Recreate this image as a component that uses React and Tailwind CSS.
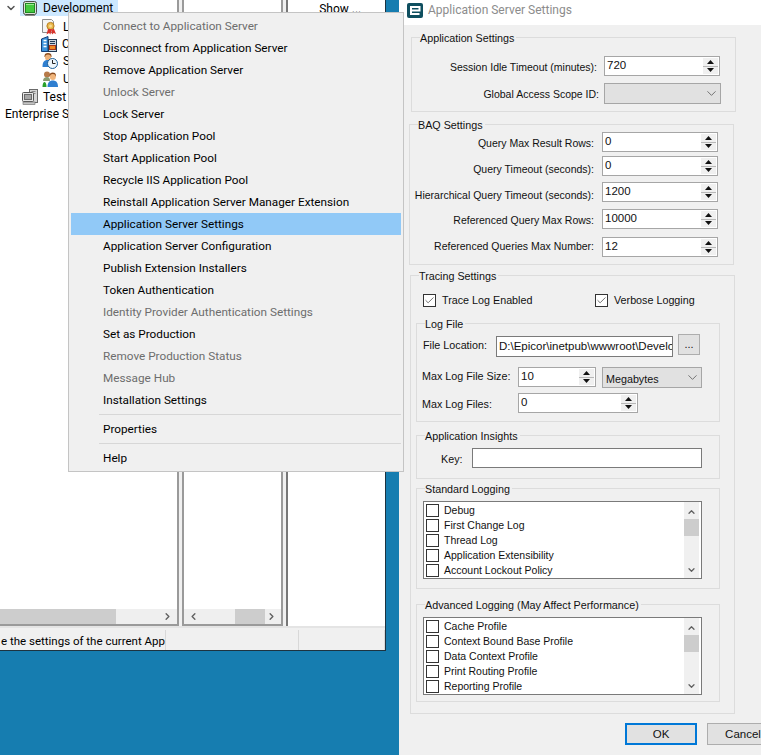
import { ChevronDown, ChevronLeft, ChevronRight, ChevronUp, Check } from "lucide-react";

const menuFont = { fontFamily: 'Roboto, "Noto Sans", sans-serif' };

const menuGroups = [
  [
    ["Connect to Application Server", true],
    ["Disconnect from Application Server"],
    ["Remove Application Server"],
    ["Unlock Server", true],
    ["Lock Server"],
    ["Stop Application Pool"],
    ["Start Application Pool"],
    ["Recycle IIS Application Pool"],
    ["Reinstall Application Server Manager Extension"],
    ["Application Server Settings", false, true],
    ["Application Server Configuration"],
    ["Publish Extension Installers"],
    ["Token Authentication"],
    ["Identity Provider Authentication Settings", true],
    ["Set as Production"],
    ["Remove Production Status", true],
    ["Message Hub", true],
    ["Installation Settings"],
  ],
  [["Properties"]],
  [["Help"]],
];

function ServerIcon({ on }) {
  if (on) {
    return (
      <svg width="16" height="15" viewBox="0 0 16 15" className="shrink-0">
        <rect x="1.500" y="0.500" width="13" height="13" rx="2" fill="#d9e0d6" stroke="#4a4f4a" />
        <rect x="3.500" y="2.500" width="9" height="9" fill="#43c93f" stroke="#1f8a22" />
        <path d="M4 3.500h8" stroke="#9be892" />
        <path d="M3 14.500h10" stroke="#8a8a8a" />
      </svg>
    );
  }
  return (
    <svg width="16" height="16" viewBox="0 0 16 16" className="shrink-0">
      <rect x="7.500" y="0.500" width="8" height="13" fill="#d6d6d6" stroke="#6a6a6a" />
      <path d="M9.500 2.500h4M9.500 4.500h4" stroke="#8a8a8a" />
      <rect x="0.500" y="3.500" width="11" height="9" rx="1" fill="#e6e6e6" stroke="#555" />
      <rect x="2.500" y="5.500" width="7" height="5" fill="#a6a6a6" stroke="#6a6a6a" />
      <rect x="1" y="13" width="12" height="2.500" fill="#c4c4c4" stroke="#6a6a6a" strokeWidth="0.600" />
    </svg>
  );
}

function LicenseIcon() {
  return (
    <svg width="16" height="16" viewBox="0 0 16 16" className="shrink-0">
      <path d="M0.500 0.500h9l2 2v11h-11z" fill="#f4f4f4" stroke="#8f8f8f" />
      <circle cx="8.500" cy="7" r="3.600" fill="#eab84c" stroke="#b9801f" />
      <circle cx="8.500" cy="7" r="1.500" fill="#f7dc90" />
      <path d="M6 10l-1.500 5.500 2.500-1.500 1.500 1.500 1-5.500z" fill="#d8342c" />
      <path d="M9 10.500l1 5 1.700-1.500 2.300 1-2-5z" fill="#d8342c" />
    </svg>
  );
}

function CompanyIcon() {
  return (
    <svg width="16" height="16" viewBox="0 0 16 16" className="shrink-0">
      <path d="M0.500 15.500V3l6.500-2.500v15z" fill="#3c93dc" stroke="#153f78" />
      <path d="M2.500 4.500h3M2.500 7.500h3M2.500 10.500h3" stroke="#fff" strokeWidth="1.500" />
      <rect x="7.500" y="3.500" width="8" height="12" fill="#c9d4de" stroke="#223a55" />
      <path d="M9 5.500h5M9 7.500h5" stroke="#223a55" />
      <rect x="8.500" y="9.500" width="6" height="4" fill="#f08a24" stroke="#a8361a" />
    </svg>
  );
}

function SessionIcon() {
  return (
    <svg width="16" height="16" viewBox="0 0 16 16" className="shrink-0">
      <path d="M2.500 3a3.500 3 0 017 0v1h-7z" fill="#8a4a1c" />
      <circle cx="6" cy="4.500" r="3" fill="#eeb27a" />
      <path d="M0.500 14c0-5.500 2-7 5.500-7s5 1.500 5 7z" fill="#2f7fd0" />
      <circle cx="10.500" cy="10.500" r="5" fill="#eef6fb" stroke="#1c5f98" />
      <path d="M10.500 7v3.500h3" stroke="#222" fill="none" />
    </svg>
  );
}

function UsersIcon() {
  return (
    <svg width="16" height="16" viewBox="0 0 16 16" className="shrink-0">
      <circle cx="5" cy="3.500" r="3" fill="#b77a4a" />
      <path d="M1 10c0-3 2-4 4-4s3 1 3 4z" fill="#8a9a70" />
      <path d="M7.500 4a3.300 3 0 016.500 0v1.500h-6.500z" fill="#8a4a1c" />
      <circle cx="10.800" cy="6" r="3" fill="#f0b57c" />
      <path d="M5.500 16c0-4.500 2-6.500 5.300-6.500s5.200 2 5.200 6.500z" fill="#2f7fd0" />
      <path d="M0.500 16c0-3.500 1-5 2-5s2 1.500 2 5z" fill="#2aa02a" />
    </svg>
  );
}

function TreeRow({ icon, label, indent, h }) {
  return (
    <div className={`flex items-center whitespace-nowrap ${h} ${indent}`}>
      {icon}
      <span className="ml-[5px]">{label}</span>
    </div>
  );
}

function ScrollBar({ left, thumbClass }) {
  return (
    <div className="flex h-[15px] items-center bg-[#efefef] text-[#606060]">
      {left && <ChevronLeft size={11} strokeWidth={3} className="ml-[4px] shrink-0" />}
      <div className={`h-[15px] bg-[#cdcdcd] ${thumbClass}`} />
      <ChevronRight size={11} strokeWidth={3} className="ml-auto mr-[4px] shrink-0" />
    </div>
  );
}

function BackgroundWindow() {
  return (
    <div className="flex h-[651px] w-[386px] flex-col border-r border-b border-[#1d3340] bg-[#f0f0f0] text-[12px] text-black" style={menuFont}>
      <div className="flex h-[628px] border-b-2 border-[#e4e4e4]">
        <div className="flex w-[180px] flex-col border-r-2 border-b-2 border-[#9a9a9a] bg-white">
          <div className="flex-1 overflow-hidden">
            <div className="flex h-[16px] items-center">
              <ChevronDown size={12} strokeWidth={3} className="ml-[5px] text-[#555]" />
              <div className="ml-[3px] flex h-[16px] w-[98px] items-center bg-[#cce8ff] pl-[2px]">
                <ServerIcon on />
                <span className="ml-[5px]">Development</span>
              </div>
            </div>
            <TreeRow icon={<LicenseIcon />} label="Licensing" indent="pl-[42px] mt-[2px]" h="h-[17px]" />
            <TreeRow icon={<CompanyIcon />} label="Companies" indent="pl-[41px]" h="h-[17px]" />
            <TreeRow icon={<SessionIcon />} label="Sessions" indent="pl-[42px]" h="h-[18px]" />
            <TreeRow icon={<UsersIcon />} label="Users" indent="pl-[42px]" h="h-[18px]" />
            <TreeRow icon={<ServerIcon />} label="Test" indent="pl-[22px]" h="h-[18px]" />
            <div className="h-[17px] whitespace-nowrap pl-[5px] leading-[17px]">Enterprise Search</div>
          </div>
          <ScrollBar thumbClass="w-[116px]" />
        </div>
        <div className="ml-[3px] flex w-[101px] flex-col border-x-2 border-b-2 border-[#9a9a9a] bg-white">
          <div className="flex-1" />
          <ScrollBar left thumbClass="ml-[36px] w-[30px]" />
        </div>
        <div className="ml-[3px] w-[99px] whitespace-nowrap border-l-2 border-[#777] bg-white pl-[31px] leading-[19px]">Show ...</div>
      </div>
      <div className="flex h-[22px] items-stretch pt-[2px] text-[11.5px]">
        <div className="w-[166px] overflow-hidden whitespace-nowrap border-r border-[#d8d8d8] pl-[1px] leading-[22px]">e the settings of the current Application</div>
        <div className="w-[133px] border-r border-[#d8d8d8]" />
        <div className="w-[86px] border-r border-[#d8d8d8]" />
      </div>
    </div>
  );
}

function ContextMenu() {
  return (
    <div className="absolute left-[68px] top-[12px] z-10 w-[336px] border border-[#c4c4c4] bg-[#f0f0f0] px-[2px] py-[2px] text-[11.75px] text-black" style={menuFont}>
      {menuGroups.map((group, i) => (
        <div key={i}>
          {i > 0 && (
            <div className="flex h-[7px] items-center pl-[28px]">
              <div className="h-px w-full bg-[#d7d7d7]" />
            </div>
          )}
          {group.map(([label, disabled, active]) => (
            <div
              key={label}
              className={`h-[22px] pl-[32px] leading-[22px] whitespace-nowrap ${active ? "bg-[#91c9f7]" : ""} ${disabled ? "text-[#6d6d6d]" : ""}`}
            >
              {label}
            </div>
          ))}
        </div>
      ))}
    </div>
  );
}

function Group({ title, className, children }) {
  return (
    <div className={`relative border border-[#dcdcdc] ${className}`}>
      <div className="absolute left-[8px] top-[-6px] bg-[#f0f0f0] pr-[2px]">{title}</div>
      {children}
    </div>
  );
}

function Spin({ value, className }) {
  return (
    <div className={`flex items-stretch border border-[#a6a6a6] bg-white ${className}`}>
      <div className="flex-1 pl-[2px] pt-[2px] text-[11.5px]">{value}</div>
      <div className="my-[1px] mr-[1px] flex w-[15px] flex-col justify-center gap-[1px] bg-[#b8b8b8]">
        <div className="flex flex-1 items-center justify-center bg-[#f0f0f0]">
          <svg width="7" height="4" viewBox="0 0 7 4"><path d="M3.500 0L7 4H0z" fill="#111" /></svg>
        </div>
        <div className="flex flex-1 items-center justify-center bg-[#f0f0f0]">
          <svg width="7" height="4" viewBox="0 0 7 4"><path d="M0 0h7L3.500 4z" fill="#111" /></svg>
        </div>
      </div>
    </div>
  );
}

function Combo({ value, className }) {
  return (
    <div className={`flex items-center justify-between border border-[#a6a6a6] bg-[#e1e1e1] pl-[3px] pr-[1px] ${className}`}>
      <span className="mt-[3px]">{value}</span>
      <ChevronDown size={15} strokeWidth={1.25} className="text-[#555]" />
    </div>
  );
}

function CheckBox({ checked }) {
  return (
    <div className="flex h-[13px] w-[13px] shrink-0 items-center justify-center border border-[#333] bg-white">
      {checked && <Check size={11} strokeWidth={1.5} className="text-[#333]" />}
    </div>
  );
}

function NumberRow({ label, value, className, labelClass }) {
  return (
    <div className={`flex items-center ${className}`}>
      <div className={`w-[192px] text-right text-[10.5px] ${labelClass}`}>{label}</div>
      <Spin value={value} className="h-[20px] w-[116px]" />
    </div>
  );
}

function LogList({ items }) {
  return (
    <div className="ml-[6px] mt-[12px] flex h-[78px] w-[279px] border border-[#7a7a7a] bg-white">
      <div className="flex-1 pl-[2px] pt-[1px] text-[10.5px]">
        {items.map((item) => (
          <div key={item} className="flex h-[15px] items-center">
            <CheckBox />
            <span className="ml-[5px]">{item}</span>
          </div>
        ))}
      </div>
      <div className="mr-[2px] flex w-[15px] flex-col items-center bg-[#f0f0f0] text-[#606060]">
        <ChevronUp size={11} strokeWidth={3} className="mt-[5px] mb-[2px] h-[10px]" />
        <div className="h-[17px] w-full bg-[#cdcdcd]" />
        <ChevronDown size={11} strokeWidth={3} className="mb-[3px] mt-auto h-[10px]" />
      </div>
    </div>
  );
}

function SettingsDialog() {
  return (
    <div className="h-[755px] w-[362px] shrink-0 overflow-hidden whitespace-nowrap bg-[#f0f0f0] text-[10.75px] leading-[13px] text-[#111]" style={{ fontFamily: '"Liberation Sans", Arial, sans-serif' }}>
      <div className="flex h-[25px] items-center bg-white pl-[8px]">
        <svg width="16" height="15" viewBox="0 0 16 15" className="mt-[-5px]">
          <rect width="16" height="15" rx="2" fill="#0f4f5f" />
          <path d="M3.500 7.500h9V4H4v7h8.500" fill="none" stroke="#fff" strokeWidth="2" />
        </svg>
        <span className="ml-[5px] mt-[-4px] text-[12px] text-[#8c8c8c]" style={menuFont}>Application Server Settings</span>
      </div>

      <Group title="Application Settings" className="ml-[12px] mt-[12px] h-[75px] w-[325px]">
        <NumberRow label="Session Idle Timeout (minutes):" value="720" className="mt-[18px]" labelClass="mt-[2px] pr-[7px]" />
        <div className="mt-[7px] flex items-center">
          <div className="mt-[2px] w-[192px] pr-[5px] text-right text-[10.5px]">Global Access Scope ID:</div>
          <Combo className="h-[21px] w-[117px]" />
        </div>
      </Group>

      <Group title="BAQ Settings" className="ml-[10px] mt-[12px] h-[141px] w-[325px]">
        <NumberRow label="Query Max Result Rows:" value="0" className="mt-[7px]" labelClass="mt-[2px] pr-[8px]" />
        <NumberRow label="Query Timeout (seconds):" value="0" className="mt-[4px]" labelClass="mt-[6px] pr-[8px]" />
        <NumberRow label="Hierarchical Query Timeout (seconds):" value="1200" className="mt-[6px]" labelClass="mt-[6px] pr-[8px]" />
        <NumberRow label="Referenced Query Max Rows:" value="10000" className="mt-[7px]" labelClass="mt-[2px] pr-[8px]" />
        <NumberRow label="Referenced Queries Max Number:" value="12" className="mt-[8px]" labelClass="mb-[2px] pr-[8px]" />
      </Group>

      <Group title="Tracing Settings" className="ml-[11px] mt-[10px] h-[439px] w-[325px]">
        <div className="ml-[12px] mt-[18px] flex items-center">
          <CheckBox checked />
          <span className="ml-[6px] w-[153px]">Trace Log Enabled</span>
          <CheckBox checked />
          <span className="ml-[6px]">Verbose Logging</span>
        </div>

        <Group title="Log File" className="ml-[5px] mt-[16px] h-[99px] w-[304px]">
          <div className="ml-[6px] mt-[12px] flex items-start">
            <span className="mt-[3px] w-[73px]">File Location:</span>
            <div className="h-[21px] w-[177px] overflow-hidden border border-[#7a7a7a] bg-white px-[2px] text-[11.5px] leading-[19px]">D:\Epicor\inetpub\wwwroot\Development\Server\Log</div>
            <div className="ml-[5px] mt-[-2px] h-[21px] w-[22px] border border-[#adadad] bg-[#e1e1e1] text-center leading-[18px]">...</div>
          </div>
          <div className="ml-[5px] mt-[10px] flex items-start">
            <span className="mt-[3px] w-[96px]">Max Log File Size:</span>
            <Spin value="10" className="h-[20px] w-[78px]" />
            <Combo value="Megabytes" className="ml-[6px] h-[21px] w-[100px]" />
          </div>
          <div className="ml-[5px] mt-[5px] flex items-center">
            <span className="mt-[2px] w-[96px]">Max Log Files:</span>
            <Spin value="0" className="h-[20px] w-[120px]" />
          </div>
        </Group>

        <Group title="Application Insights" className="ml-[5px] mt-[13px] h-[44px] w-[304px]">
          <div className="ml-[24px] mt-[12px] flex items-center">
            <span className="mt-[2px] w-[31px]">Key:</span>
            <div className="h-[20px] w-[230px] border border-[#7a7a7a] bg-white" />
          </div>
        </Group>

        <Group title="Standard Logging" className="ml-[5px] mt-[9px] h-[101px] w-[304px]">
          <LogList items={["Debug", "First Change Log", "Thread Log", "Application Extensibility", "Account Lockout Policy"]} />
        </Group>

        <Group title="Advanced Logging (May Affect Performance)" className="ml-[5px] mt-[15px] h-[98px] w-[304px]">
          <LogList items={["Cache Profile", "Context Bound Base Profile", "Data Context Profile", "Print Routing Profile", "Reporting Profile"]} />
        </Group>
      </Group>

      <div className="ml-[226px] mt-[9px] flex text-[11.5px]">
        <div className="h-[22px] w-[72px] shrink-0 border-2 border-[#0078d7] bg-[#e1e1e1] text-center leading-[18px]">OK</div>
        <div className="ml-[10px] h-[22px] w-[72px] shrink-0 border border-[#adadad] bg-[#e1e1e1] text-center leading-[20px]">Cancel</div>
      </div>
    </div>
  );
}

export default function App() {
  return (
    <div className="relative flex h-[755px] w-[761px] overflow-hidden">
      <div className="w-[399px] shrink-0 bg-[#167db0]">
        <BackgroundWindow />
      </div>
      <SettingsDialog />
      <ContextMenu />
    </div>
  );
}
